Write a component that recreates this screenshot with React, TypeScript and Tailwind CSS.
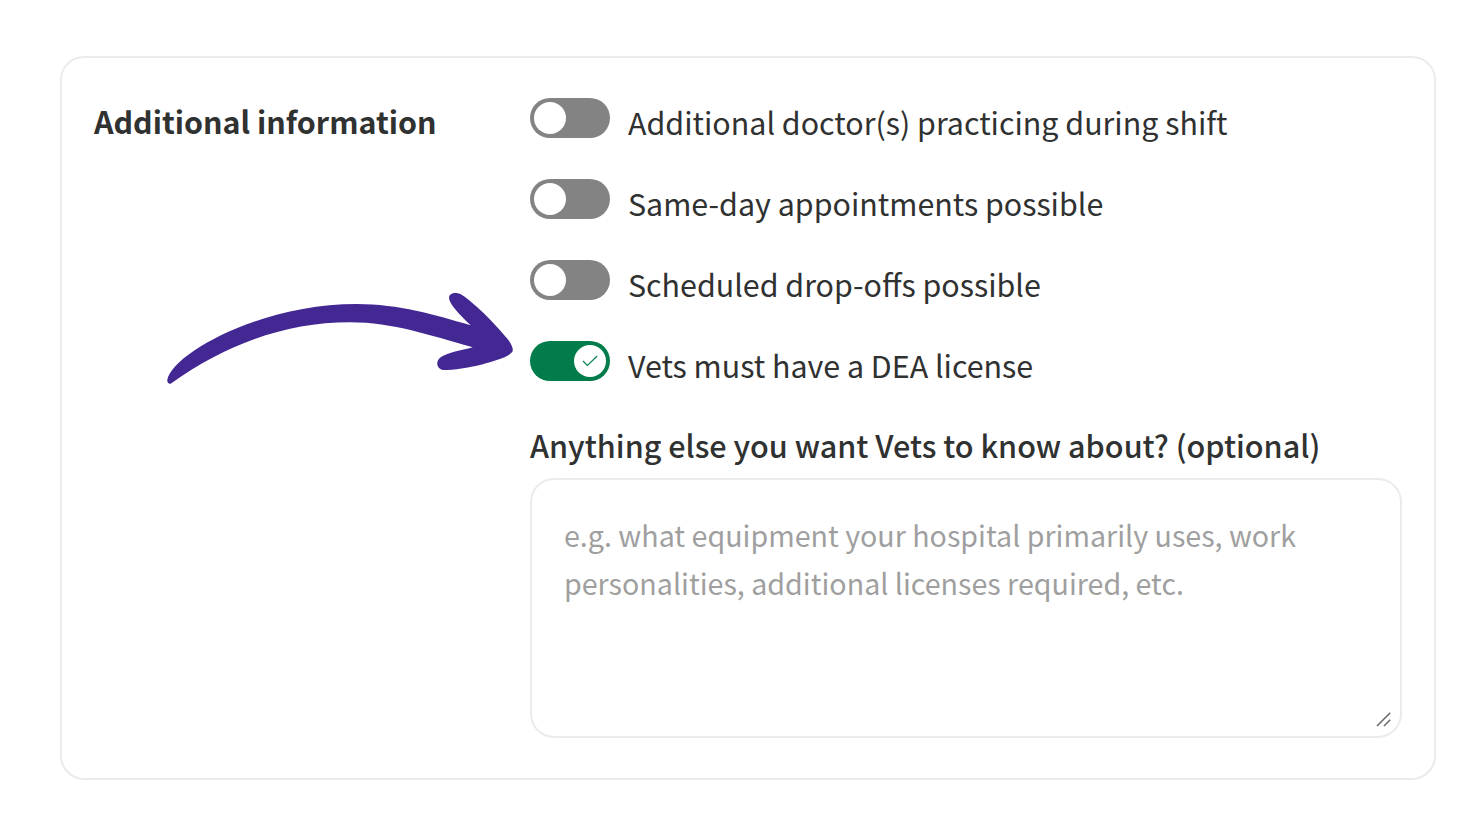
import { useState } from 'react'
import clsx from 'clsx'

interface ToggleOption {
  id: string
  label: string
  defaultOn: boolean
}

const OPTIONS: ToggleOption[] = [
  { id: 'doctors', label: 'Additional doctor(s) practicing during shift', defaultOn: false },
  { id: 'same-day', label: 'Same-day appointments possible', defaultOn: false },
  { id: 'drop-offs', label: 'Scheduled drop-offs possible', defaultOn: false },
  { id: 'dea', label: 'Vets must have a DEA license', defaultOn: true },
]

function Toggle({ option }: { option: ToggleOption }) {
  const [on, setOn] = useState(option.defaultOn)

  return (
    <div className="flex h-10 items-center">
      <button
        type="button"
        role="switch"
        aria-checked={on}
        aria-labelledby={option.id}
        onClick={() => setOn((v) => !v)}
        className={clsx(
          'flex h-10 w-20 shrink-0 items-center rounded-full px-1',
          on ? 'justify-end bg-[#027c4b]' : 'justify-start bg-[#838383]',
        )}
      >
        <span className="flex size-8 items-center justify-center rounded-full bg-white">
          {on && (
            <svg viewBox="0 0 16 12" className="h-3 w-4" fill="none" stroke="#027c4b" strokeWidth="1.1">
              <path d="M1 6 L5.4 10.4 L15.2 1" />
            </svg>
          )}
        </span>
      </button>
      <span id={option.id} className="mt-2 ml-[18px] text-[30.4px] leading-10 whitespace-nowrap">
        {option.label}
      </span>
    </div>
  )
}

function Arrow() {
  return (
    <svg viewBox="160 285 360 105" className="absolute top-[285px] left-[160px] h-[105px] w-[360px]">
      <path
        fill="#432894"
        d="M167.3 380 C172 354 260 304 356.7 304 C399 304 435 315 470.7 325.3 C460 315 449 304 449 297.5 C449.5 293 456 291.5 462 295 C476 304 499 328 508 339.5 C512 345 513.5 349 512.5 351.5 C508 358 494 361 482 364.5 C468 368 454 370 443.5 370 C436.5 369 435 361 441 357 C448 352.5 461 350.5 472.7 347.3 C430 335.5 393 322.3 350 322.3 C285 322.3 225 345 171 383.5 C169 384.3 167 383 167.3 380 Z"
      />
    </svg>
  )
}

export default function App() {
  return (
    <main className="relative h-[822px] w-[1484px] overflow-hidden bg-white px-[60px] pt-14 font-['Noto_Sans_CJK_SC',sans-serif] text-[#303131]">
      <section className="flex h-[724px] w-[1376px] rounded-3xl border-2 border-[#ebebeb] pt-10 pl-8">
        <h2 className="w-[436px] shrink-0 pt-[3px] text-[30.45px] leading-10 font-bold">Additional information</h2>
        <div className="w-[872px]">
          <div className="flex flex-col gap-[41px]">
            {OPTIONS.map((option) => (
              <Toggle key={option.id} option={option} />
            ))}
          </div>
          <label htmlFor="notes" className="mt-11 block text-[30.58px] leading-10 font-medium">
            Anything else you want Vets to know about? (optional)
          </label>
          <div className="relative mt-[13px]">
            <textarea
              id="notes"
              className="block h-[260px] w-full resize-none rounded-3xl border-2 border-[#ebebeb] px-8 py-[31px] text-[28.64px] leading-12 placeholder:text-[#9f9f9f]"
              placeholder="e.g. what equipment your hospital primarily uses, work personalities, additional licenses required, etc."
            />
            <svg
              viewBox="0 0 16 16"
              className="pointer-events-none absolute right-2.5 bottom-2.5 size-4"
              fill="none"
              stroke="#6b6b6b"
              strokeWidth="1.6"
            >
              <path d="M1 14 L14.2 0.8 M8 14 L14.2 7.8" />
            </svg>
          </div>
        </div>
      </section>
      <Arrow />
    </main>
  )
}
